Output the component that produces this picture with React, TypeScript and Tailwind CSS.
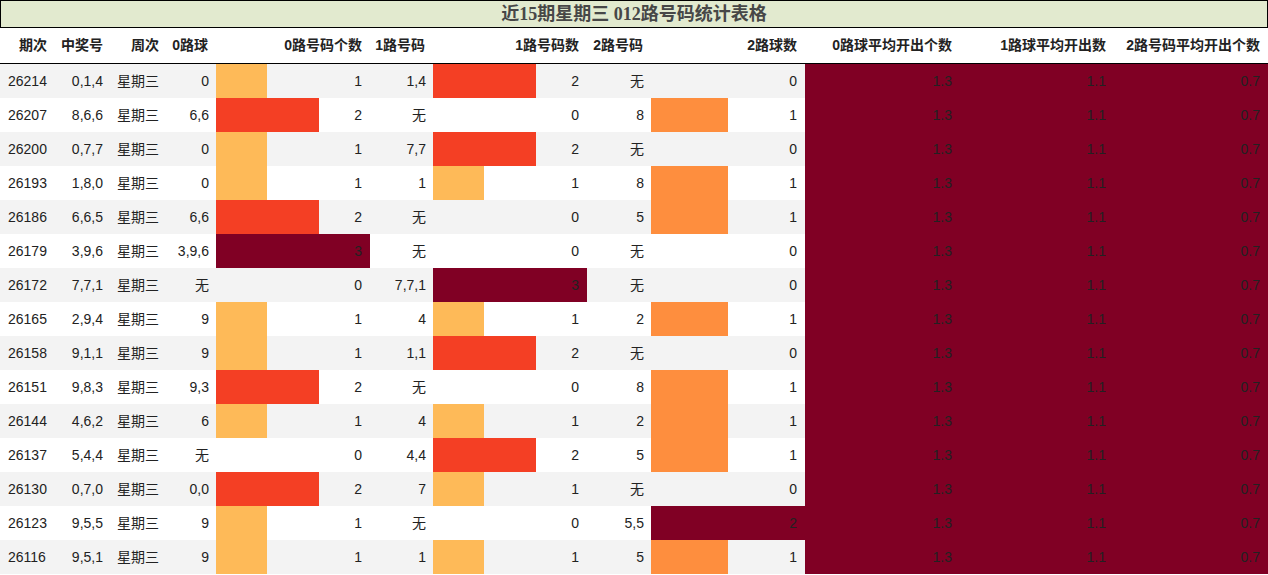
const cols =
  "grid grid-cols-[55px_56px_56px_49px_154px_63px_154px_64px_154px_155px_154px_154px]"

type Row = [string, string, string, number, string, number, string, number]

const rows: Row[] = [
  ["26214", "0,1,4", "0", 1, "1,4", 2, "无", 0],
  ["26207", "8,6,6", "6,6", 2, "无", 0, "8", 1],
  ["26200", "0,7,7", "0", 1, "7,7", 2, "无", 0],
  ["26193", "1,8,0", "0", 1, "1", 1, "8", 1],
  ["26186", "6,6,5", "6,6", 2, "无", 0, "5", 1],
  ["26179", "3,9,6", "3,9,6", 3, "无", 0, "无", 0],
  ["26172", "7,7,1", "无", 0, "7,7,1", 3, "无", 0],
  ["26165", "2,9,4", "9", 1, "4", 1, "2", 1],
  ["26158", "9,1,1", "9", 1, "1,1", 2, "无", 0],
  ["26151", "9,8,3", "9,3", 2, "无", 0, "8", 1],
  ["26144", "4,6,2", "6", 1, "4", 1, "2", 1],
  ["26137", "5,4,4", "无", 0, "4,4", 2, "5", 1],
  ["26130", "0,7,0", "0,0", 2, "7", 1, "无", 0],
  ["26123", "9,5,5", "9", 1, "无", 0, "5,5", 2],
  ["26116", "9,5,1", "9", 1, "1", 1, "5", 1],
]

const heads = [
  "期次",
  "中奖号",
  "周次",
  "0路球",
  "0路号码个数",
  "1路号码",
  "1路号码数",
  "2路号码",
  "2路球数",
  "0路球平均开出个数",
  "1路球平均开出数",
  "2路号码平均开出个数",
]

const barColor: Record<number, string> = { 1: "#feba58", 2: "#f43f24", 3: "#800024" }
const bar2Color: Record<number, string> = { 1: "#fe8e3e", 2: "#800024" }

function BarCell({ value, max, color }: { value: number; max: number; color?: string }) {
  return (
    <div className="relative flex items-center justify-end pr-[8px]">
      {value > 0 && (
        <div
          className="absolute inset-y-0 left-0"
          style={{ width: `${(value / max) * 100}%`, background: color }}
        />
      )}
      <span className="relative">{value}</span>
    </div>
  )
}

export default function App() {
  return (
    <div
      className="w-[1268px] h-[575px] bg-white text-[14px] text-[#222] overflow-hidden"
      style={{ fontFamily: '"Liberation Sans", "Noto Sans CJK SC", sans-serif' }}
    >
      <div className="h-[28px] border border-black bg-[#e2eacf] flex items-center justify-center">
        <span
          className="text-[18px] font-bold text-[#474747] leading-none"
          style={{ fontFamily: '"Liberation Serif", "Noto Sans CJK SC", serif' }}
        >
          近15期星期三 012路号码统计表格
        </span>
      </div>
      <div className={`${cols} h-[36px] border-b border-black font-bold`}>
        {heads.map((h) => (
          <div key={h} className="flex items-center justify-end pr-[8px] whitespace-nowrap">
            {h}
          </div>
        ))}
      </div>
      {rows.map((r, i) => (
        <div
          key={r[0]}
          className={`${cols} h-[34px] ${i % 2 === 0 ? "bg-[#f3f3f3]" : "bg-white"}`}
        >
          <div className="flex items-center pl-[8px]">{r[0]}</div>
          <div className="flex items-center justify-end pr-[8px]">{r[1]}</div>
          <div className="flex items-center pl-[6px]">星期三</div>
          <div className="flex items-center justify-end pr-[7px]">{r[2]}</div>
          <BarCell value={r[3]} max={3} color={barColor[r[3]]} />
          <div className="flex items-center justify-end pr-[7px]">{r[4]}</div>
          <BarCell value={r[5]} max={3} color={barColor[r[5]]} />
          <div className="flex items-center justify-end pr-[7px]">{r[6]}</div>
          <BarCell value={r[7]} max={2} color={bar2Color[r[7]]} />
          <div className="flex items-center justify-end pr-[8px] bg-[#800024]">1.3</div>
          <div className="flex items-center justify-end pr-[8px] bg-[#800024]">1.1</div>
          <div className="flex items-center justify-end pr-[8px] bg-[#800024]">0.7</div>
        </div>
      ))}
    </div>
  )
}
